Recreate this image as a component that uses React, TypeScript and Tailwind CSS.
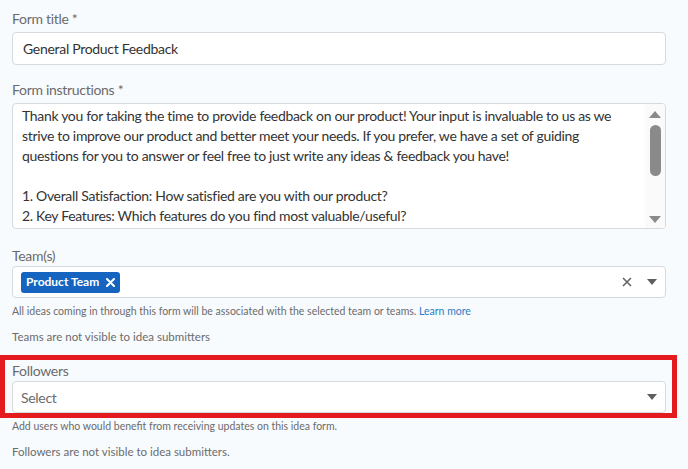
import React from 'react';

const Caret = () => (
  <svg width="10" height="6" viewBox="0 0 10 6" className="text-[#5f5f5f]">
    <path d="M0 0 H10 L5 6 Z" fill="currentColor" />
  </svg>
);

const Label = ({ children, className = '' }: { children: React.ReactNode; className?: string }) => (
  <div className={`text-[14px] leading-[20px] tracking-[-0.3px] text-[#6b6b6b] ${className}`}>{children}</div>
);

const instructions = [
  'Thank you for taking the time to provide feedback on our product! Your input is invaluable to us as we',
  'strive to improve our product and better meet your needs. If you prefer, we have a set of guiding',
  'questions for you to answer or feel free to just write any ideas & feedback you have!',
  '',
  '1. Overall Satisfaction: How satisfied are you with our product?',
  '2. Key Features: Which features do you find most valuable/useful?',
];

export default function App() {
  return (
    <div
      className="w-[688px] h-[469px] overflow-hidden bg-[#f8fbfe] pl-[12px] pr-[22px]"
      style={{ fontFamily: 'Lato, "Open Sans", sans-serif' }}
    >
      <Label className="pt-[9px] mb-[3px]">Form title *</Label>
      <div className="h-[33px] bg-white border border-[#d6d9de] rounded-[4px] flex items-center px-[10px] text-[14px] tracking-[-0.3px] text-[#333]">
        General Product Feedback
      </div>

      <Label className="mt-[15px] mb-[3px]">Form instructions *</Label>
      <div className="h-[126px] bg-white border border-[#d6d9de] rounded-[4px] flex overflow-hidden">
        <div className="flex-1 pl-[9px] pt-[2px] text-[14px] leading-[20px] tracking-[-0.32px] text-[#333]">
          {instructions.map((line, i) => (
            <div key={i} className="h-[20px] whitespace-nowrap">{line}</div>
          ))}
        </div>
        <div className="w-[20px] bg-[#fafafa] flex flex-col items-center pt-[7px] pb-[5px]">
          <svg width="12" height="7" viewBox="0 0 12 7">
            <path d="M0 7 L6 0 L12 7 Z" fill="#8a8a8a" />
          </svg>
          <div className="w-[11px] h-[51px] bg-[#8a8a8a] rounded-full mt-[7px]" />
          <div className="flex-1" />
          <svg width="12" height="7" viewBox="0 0 12 7">
            <path d="M0 0 L12 0 L6 7 Z" fill="#8a8a8a" />
          </svg>
        </div>
      </div>

      <Label className="mt-[17px]">Team(s)</Label>
      <div className="h-[32px] bg-white border border-[#d6d9de] rounded-[4px] flex items-center pl-[8px] pr-[8px]">
        <div className="h-[21px] bg-[#1565c0] rounded-[3px] flex items-center gap-[7px] px-[5px] text-white text-[12px] font-bold">
          <span>Product Team</span>
          <svg width="9" height="9" viewBox="0 0 9 9">
            <path d="M1 1 L8 8 M8 1 L1 8" stroke="white" strokeWidth="2" strokeLinecap="round" />
          </svg>
        </div>
        <div className="flex-1" />
        <svg width="10" height="10" viewBox="0 0 10 10" className="mr-[15px]">
          <path d="M1 1 L9 9 M9 1 L1 9" stroke="#5f5f5f" strokeWidth="1.5" />
        </svg>
        <Caret />
      </div>
      <div className="mt-[6px] text-[10.5px] leading-[14px] text-[#6b6b6b] whitespace-nowrap">
        All ideas coming in through this form will be associated with the selected team or teams.{' '}
        <span className="text-[#2b7bc4]">Learn more</span>
      </div>
      <div className="mt-[12px] text-[11.5px] leading-[14px] text-[#6b6b6b]">Teams are not visible to idea submitters</div>

      <div className="relative mt-[17px]">
        <div className="absolute left-[-12px] top-[-6px] w-[677px] h-[63px] border-[5px] border-[#e31b1f]" />
        <Label>Followers</Label>
        <div className="h-[32px] bg-white border border-[#d6d9de] rounded-[4px] flex items-center pl-[8px] pr-[8px] text-[14px] tracking-[-0.3px] text-[#6b6b6b]">
          <span>Select</span>
          <div className="flex-1" />
          <Caret />
        </div>
      </div>
      <div className="mt-[6px] text-[10.5px] leading-[14px] text-[#6b6b6b] whitespace-nowrap">
        Add users who would benefit from receiving updates on this idea form.
      </div>
      <div className="mt-[12px] text-[11.5px] leading-[14px] text-[#6b6b6b]">Followers are not visible to idea submitters.</div>
    </div>
  );
}
